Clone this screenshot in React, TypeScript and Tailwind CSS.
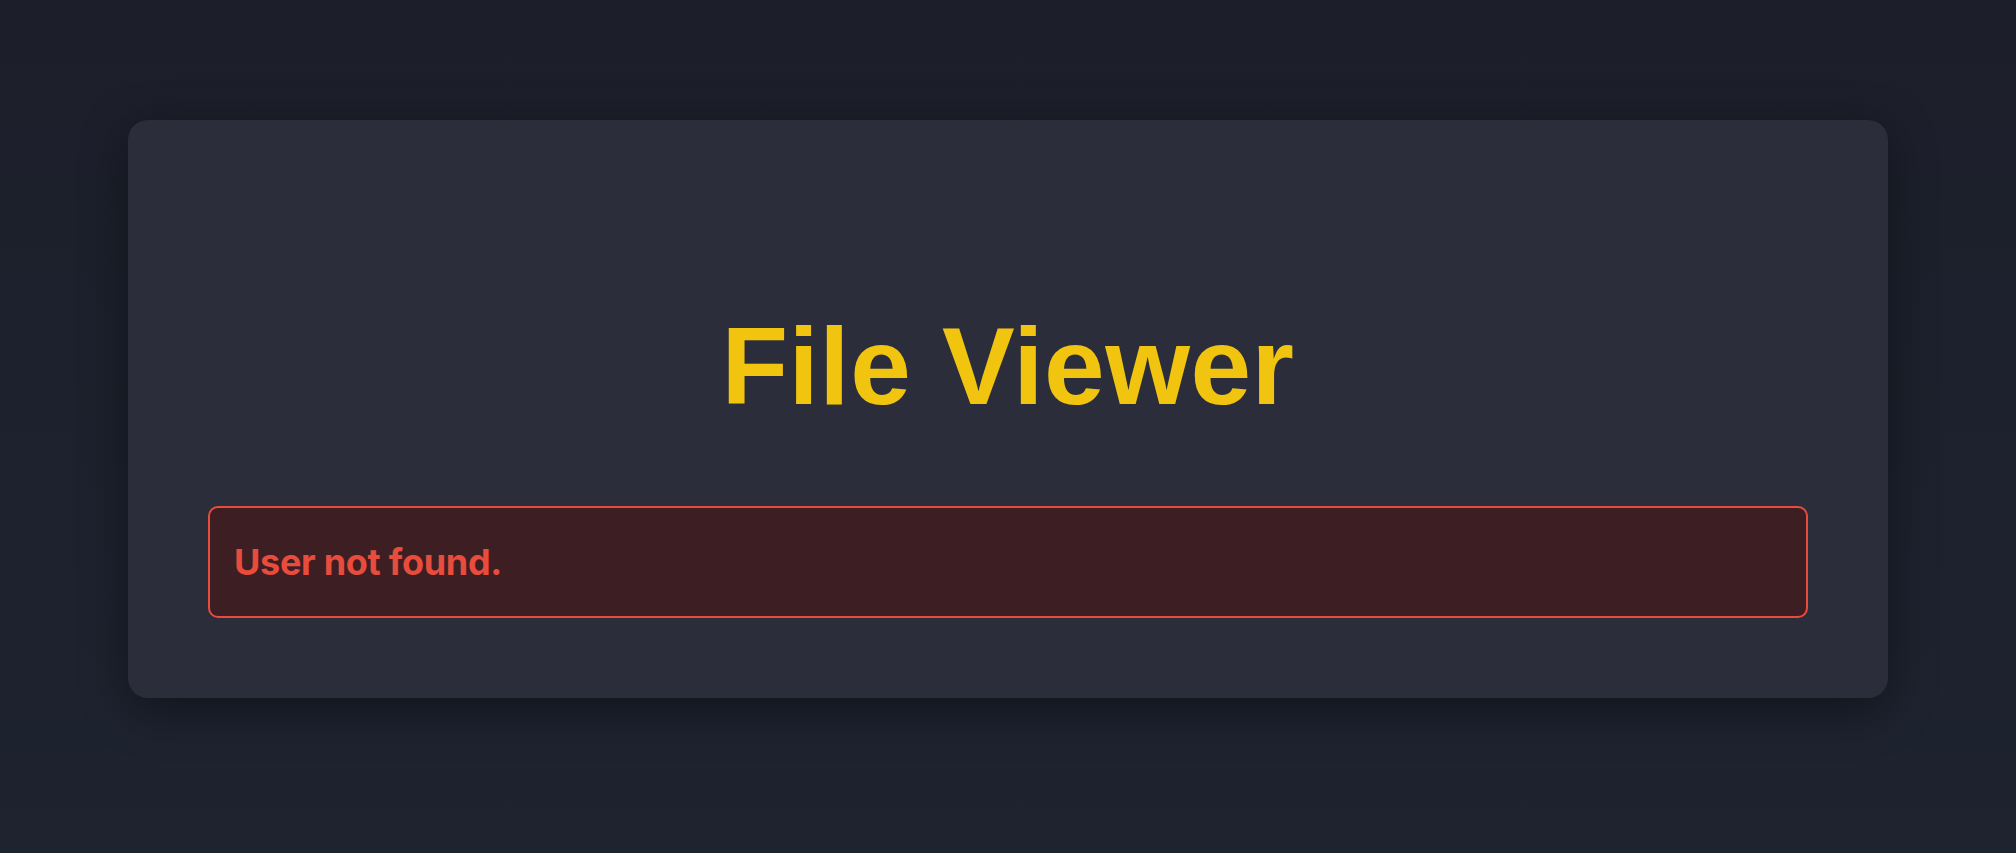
import React from 'react';

export default function App() {
  return (
    <div className="min-h-screen w-full bg-gradient-to-b from-[#1c1f2a] to-[#1e2330] px-[128px] pt-[120px] pb-[155px]">
      <div className="rounded-[20px] bg-[#2b2d3a] shadow-[0_12px_48px_rgba(0,0,0,0.4)] px-20 pb-20 pt-[192px]">
        <h1
          className="text-center text-[109px] leading-none font-bold text-[#f1c40f] tracking-[0.5px] mb-[85px]"
          style={{ fontFamily: '"Liberation Sans Narrow", "Arial Narrow", "Liberation Sans", sans-serif' }}
        >
          File Viewer
        </h1>
        <div className="h-[112px] flex items-center rounded-[10px] border-2 border-[#e74c3c] bg-[#3d1f23] px-6">
          <span className="font-['Inter',sans-serif] text-[36px] font-bold text-[#e74c3c] tracking-[-0.3px]">
            User not found.
          </span>
        </div>
      </div>
    </div>
  );
}
